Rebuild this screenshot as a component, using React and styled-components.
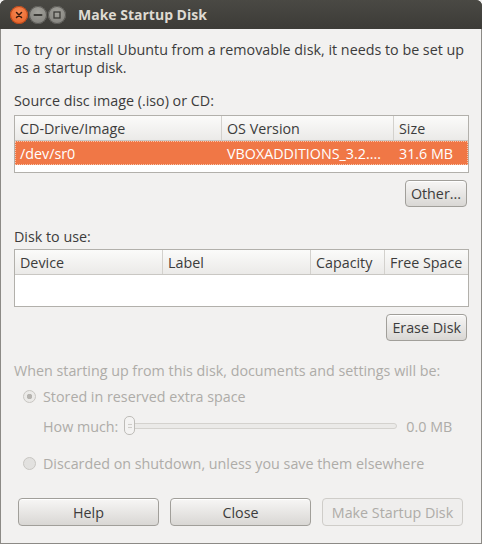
import React from 'react'
import styled, { createGlobalStyle } from 'styled-components'

const Global = createGlobalStyle`
   html, body {
      margin: 0;
      padding: 0;
      background: #f2f1f0;
   }
   body {
      font-family: 'Open Sans', 'DejaVu Sans', sans-serif;
      font-size: 14.3px;
      color: #3c3c3c;
   }
`

const sourceColumns = [
   { title: 'CD-Drive/Image', width: 207 },
   { title: 'OS Version', width: 172 },
   { title: 'Size', width: 74 },
]

const diskColumns = [
   { title: 'Device', width: 148 },
   { title: 'Label', width: 148 },
   { title: 'Capacity', width: 74 },
   { title: 'Free Space', width: 83 },
]

const WindowButton = ({ close }) => (
   <WinBtn close={close}>
      {close ? (
         <svg width="8" height="8" viewBox="0 0 8 8">
            <path d="M1.5 1.5 L6.5 6.5 M6.5 1.5 L1.5 6.5" stroke="#3a1a0c" strokeWidth="1.5" strokeLinecap="round" />
         </svg>
      ) : null}
   </WinBtn>
)

const App = () => {
   return (
      <Window>
         <Global />
         <TitleBar>
            <WindowButtons>
               <WindowButton close />
               <WinBtn>
                  <svg width="10" height="10" viewBox="0 0 10 10">
                     <path d="M1.5 5 H8.5" stroke="#3c3b37" strokeWidth="2" strokeLinecap="round" />
                  </svg>
               </WinBtn>
               <WinBtn>
                  <svg width="10" height="10" viewBox="0 0 10 10">
                     <rect x="2" y="2" width="6" height="6" fill="none" stroke="#3c3b37" strokeWidth="1.3" />
                  </svg>
               </WinBtn>
            </WindowButtons>
            <Title>Make Startup Disk</Title>
         </TitleBar>

         <Body>
            <Intro>
               To try or install Ubuntu from a removable disk, it needs to be set up
               <br />
               as a startup disk.
            </Intro>

            <Label>Source disc image (.iso) or CD:</Label>
            <Table>
               <HeaderRow>
                  {sourceColumns.map((c) => (
                     <HeaderCell key={c.title} width={c.width}>{c.title}</HeaderCell>
                  ))}
               </HeaderRow>
               <SelectedRow>
                  <Cell width={207}>/dev/sr0</Cell>
                  <Cell width={172}>VBOXADDITIONS_3.2....</Cell>
                  <Cell width={74}>31.6 MB</Cell>
               </SelectedRow>
            </Table>
            <ButtonRow>
               <SmallButton>Other...</SmallButton>
            </ButtonRow>

            <Label top="21px" bottom="4px">Disk to use:</Label>
            <Table>
               <HeaderRow>
                  {diskColumns.map((c) => (
                     <HeaderCell key={c.title} width={c.width}>{c.title}</HeaderCell>
                  ))}
               </HeaderRow>
               <EmptyArea />
            </Table>
            <ButtonRow>
               <SmallButton>Erase Disk</SmallButton>
            </ButtonRow>

            <Disabled>
               <Label top="21px">When starting up from this disk, documents and settings will be:</Label>
               <Option top="1px">
                  <Radio checked />
                  Stored in reserved extra space
               </Option>
               <SliderRow>
                  <span>How much:</span>
                  <Track>
                     <Thumb />
                  </Track>
                  <span>0.0 MB</span>
               </SliderRow>
               <Option top="17px">
                  <Radio />
                  Discarded on shutdown, unless you save them elsewhere
               </Option>
            </Disabled>

            <Footer>
               <DialogButton>Help</DialogButton>
               <DialogButton>Close</DialogButton>
               <DialogButton disabled>Make Startup Disk</DialogButton>
            </Footer>
         </Body>
      </Window>
   )
}

const Window = styled.div`
   width: 482px;
   height: 544px;
   box-sizing: border-box;
   display: flex;
   flex-direction: column;
   background: #3c3b37;
   border-radius: 6px 6px 0 0;
   overflow: hidden;
`
const TitleBar = styled.div`
   height: 29px;
   flex-shrink: 0;
   display: flex;
   align-items: center;
   padding-left: 10px;
   background: linear-gradient(#4a4944, #3c3b37);
`
const WindowButtons = styled.div`
   display: flex;
   gap: 1px;
`
const WinBtn = styled.div`
   width: 18px;
   height: 18px;
   border-radius: 50%;
   display: flex;
   align-items: center;
   justify-content: center;
   background: ${(p) =>
      p.close
         ? 'radial-gradient(circle at 50% 35%, #fa8b55, #e05a1f)'
         : 'radial-gradient(circle at 50% 35%, #a3a29c, #7b7a75)'};
   box-shadow: inset 0 0 0 1px ${(p) => (p.close ? '#b5461a' : '#5a5955')};
`
const Title = styled.div`
   margin-left: 12px;
   color: #dfdbd2;
   font-weight: bold;
   font-size: 14px;
`
const Body = styled.div`
   flex: 1;
   background: #f2f1f0;
   border: 1px solid #8c8a86;
   border-top: none;
   padding: 12px 13px 0 13px;
   display: flex;
   flex-direction: column;
`
const Intro = styled.div`
   line-height: 18px;
   margin-bottom: 15px;
`
const Label = styled.div`
   margin-top: ${(p) => p.top || '0'};
   margin-bottom: ${(p) => p.bottom || '6px'};
   line-height: 17px;
   white-space: nowrap;
`
const Table = styled.div`
   width: 455px;
   height: 58px;
   box-sizing: border-box;
   border: 1px solid #b2b0ab;
   background: #ffffff;
   display: flex;
   flex-direction: column;
`
const HeaderRow = styled.div`
   display: flex;
   height: 24px;
   flex-shrink: 0;
   background: linear-gradient(#fbfbfa, #ebeae8);
   border-bottom: 1px solid #c9c7c3;
`
const HeaderCell = styled.div`
   width: ${(p) => p.width}px;
   box-sizing: border-box;
   padding-left: 5px;
   display: flex;
   align-items: center;
   border-right: 1px solid #d3d1cd;
   white-space: nowrap;
   overflow: hidden;
   &:last-child {
      border-right: none;
      flex: 1;
   }
`
const SelectedRow = styled.div`
   display: flex;
   height: 24px;
   background: #f07746;
   color: #ffffff;
   outline: 1px dotted #f9c6ad;
   outline-offset: -1px;
`
const Cell = styled.div`
   width: ${(p) => p.width}px;
   box-sizing: border-box;
   padding-left: 5px;
   display: flex;
   align-items: center;
   white-space: nowrap;
   overflow: hidden;
   &:last-child {
      flex: 1;
   }
`
const EmptyArea = styled.div`
   flex: 1;
`
const ButtonRow = styled.div`
   display: flex;
   justify-content: flex-end;
   margin-top: 7px;
   padding-right: 1px;
`
const buttonBase = `
   box-sizing: border-box;
   font-family: 'Open Sans', 'DejaVu Sans', sans-serif;
   font-size: 14.3px;
   border: 1px solid #a19f9a;
   border-radius: 4px;
   background: linear-gradient(#f7f6f5, #d9d7d4);
   color: #3c3c3c;
   box-shadow: inset 0 1px 0 #ffffff;
   padding: 0 5px;
`
const SmallButton = styled.button`
   ${buttonBase}
   height: 27px;
`
const Disabled = styled.div`
   color: #aeaca8;
   display: flex;
   flex-direction: column;
`
const Option = styled.div`
   display: flex;
   align-items: center;
   margin-top: ${(p) => p.top || '0'};
   padding-left: 9px;
   height: 20px;
   gap: 7px;
`
const Radio = styled.div`
   width: 13px;
   height: 13px;
   box-sizing: border-box;
   border-radius: 50%;
   border: 1px solid #c8c6c2;
   background: ${(p) =>
      p.checked
         ? 'radial-gradient(circle, #b6b4b0 0 2.5px, #ebeae8 3px)'
         : '#e2e1df'};
`
const SliderRow = styled.div`
   display: flex;
   align-items: center;
   margin-top: 10px;
   padding-left: 29px;
   height: 20px;
   gap: 9px;
`
const Track = styled.div`
   position: relative;
   width: 268px;
   height: 4px;
   border: 1px solid #d4d2ce;
   border-radius: 3px;
   background: #ebeae8;
`
const Thumb = styled.div`
   position: absolute;
   left: -4px;
   top: -8px;
   width: 11px;
   height: 19px;
   box-sizing: border-box;
   border: 1px solid #bebcb8;
   border-radius: 5px;
   background: repeating-linear-gradient(#f2f1f0 0 2px, #cfcdc9 2px 3px) center / 4px 8px no-repeat,
      #f4f3f2;
`
const Footer = styled.div`
   display: flex;
   gap: 11px;
   margin-top: 25px;
   padding-left: 4px;
`
const DialogButton = styled.button`
   ${buttonBase}
   width: 141px;
   height: 28px;
   &:disabled {
      color: #aeaca8;
      background: #efeeed;
      border-color: #cfcdc9;
      box-shadow: none;
   }
`

export default App
